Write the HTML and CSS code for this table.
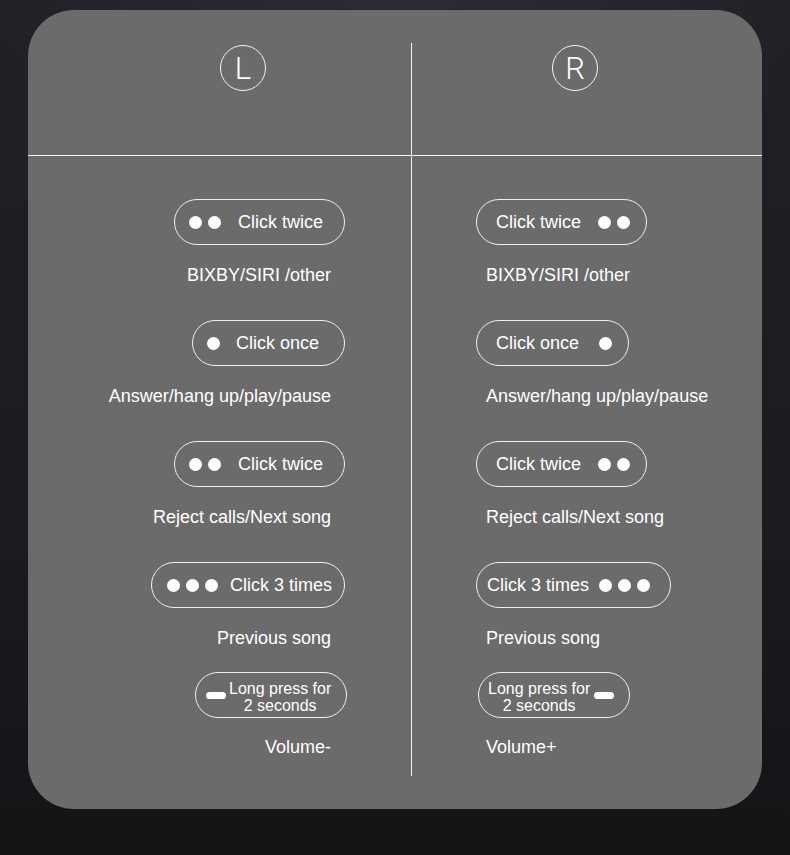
FILE: index.html
```html
<!DOCTYPE html>
<html lang="en">
<head>
<meta charset="utf-8">
<title>Earbud controls</title>
<link rel="stylesheet" href="styles.css">
</head>
<body>
<main class="card">
  <div class="head head--left"><span class="badge">L</span></div>
  <div class="divider"></div>
  <div class="head head--right"><span class="badge">R</span></div>

  <section class="col col--left">
    <div class="item">
      <div class="pill pill--l-twice"><span class="dots"><i></i><i></i></span><span class="txt">Click twice</span></div>
      <p class="label">BIXBY/SIRI /other</p>
    </div>
    <div class="item">
      <div class="pill pill--l-once"><span class="dots"><i></i></span><span class="txt">Click once</span></div>
      <p class="label">Answer/hang up/play/pause</p>
    </div>
    <div class="item">
      <div class="pill pill--l-twice"><span class="dots"><i></i><i></i></span><span class="txt">Click twice</span></div>
      <p class="label">Reject calls/Next song</p>
    </div>
    <div class="item">
      <div class="pill pill--l-three"><span class="dots"><i></i><i></i><i></i></span><span class="txt">Click 3 times</span></div>
      <p class="label">Previous song</p>
    </div>
    <div class="item item--last">
      <div class="pill pill--l-long"><span class="dash"></span><span class="txt txt--two">Long press for<br>2 seconds</span></div>
      <p class="label">Volume-</p>
    </div>
  </section>

  <section class="col col--right">
    <div class="item">
      <div class="pill pill--r-twice"><span class="txt">Click twice</span><span class="dots"><i></i><i></i></span></div>
      <p class="label">BIXBY/SIRI /other</p>
    </div>
    <div class="item">
      <div class="pill pill--r-once"><span class="txt">Click once</span><span class="dots"><i></i></span></div>
      <p class="label">Answer/hang up/play/pause</p>
    </div>
    <div class="item">
      <div class="pill pill--r-twice"><span class="txt">Click twice</span><span class="dots"><i></i><i></i></span></div>
      <p class="label">Reject calls/Next song</p>
    </div>
    <div class="item">
      <div class="pill pill--r-three"><span class="txt">Click 3 times</span><span class="dots"><i></i><i></i><i></i></span></div>
      <p class="label">Previous song</p>
    </div>
    <div class="item item--last">
      <div class="pill pill--r-long"><span class="txt txt--two">Long press for<br>2 seconds</span><span class="dash"></span></div>
      <p class="label">Volume+</p>
    </div>
  </section>
</main>
</body>
</html>
```

FILE: styles.css
```css
* { box-sizing: border-box; }

html, body { margin: 0; padding: 0; }

body {
  width: 790px;
  height: 855px;
  overflow: hidden;
  background:
    radial-gradient(ellipse 420px 260px at 400px -20px, #2c2d33 0%, rgba(44,45,51,0) 100%),
    linear-gradient(180deg, #202126 0%, #1b1c20 60%, #141417 100%);
  font-family: "Liberation Sans", Arial, sans-serif;
  color: #fff;
  padding-top: 10px;
}

.card {
  margin-left: 28px;
  width: 734px;
  height: 799px;
  background: #6b6b6c;
  border-radius: 46px;
  display: grid;
  grid-template-columns: 383px 1px 1fr;
  grid-template-rows: 146px 1fr;
}

.head {
  border-bottom: 1px solid #f2f2f2;
  padding-top: 35px;
}
.head--left { grid-column: 1; grid-row: 1; padding-left: 192px; }
.head--right { grid-column: 3; grid-row: 1; padding-left: 140px; }

.divider {
  grid-column: 2;
  grid-row: 1 / 3;
  background: #f2f2f2;
  margin: 33px 0 33px;
}

.badge {
  display: flex;
  align-items: center;
  justify-content: center;
  width: 46px;
  height: 46px;
  border: 1px solid #f4f4f4;
  border-radius: 50%;
  font-family: Roboto, "Liberation Sans", sans-serif;
  font-weight: 300;
  font-size: 31px;
  line-height: 1;
  color: #fff;
  padding-top: 1px;
}

.col {
  grid-row: 2;
  display: flex;
  flex-direction: column;
  gap: 34px;
  padding-top: 43px;
}
.col--left { grid-column: 1; align-items: flex-end; padding-right: 66px; }
.col--right { grid-column: 3; align-items: flex-start; padding-left: 64px; }

.item {
  display: flex;
  flex-direction: column;
}
.col--left .item { align-items: flex-end; }
.col--right .item { align-items: flex-start; }
.item--last { margin-top: -11px; }

.pill {
  display: flex;
  align-items: center;
  height: 46px;
  border: 1px solid #f0f0f0;
  border-radius: 23px;
  font-size: 18px;
}

.txt { white-space: nowrap; }
.txt--two {
  font-size: 16px;
  line-height: 17px;
  text-align: center;
  padding-top: 3px;
}

.dots { display: flex; gap: 6px; }
.dots i {
  display: block;
  width: 13px;
  height: 13px;
  border-radius: 50%;
  background: #fff;
}

.dash {
  display: block;
  width: 20px;
  height: 7px;
  border-radius: 4px;
  background: #fff;
  flex: none;
}

.pill--l-twice { width: 171px; padding-left: 14px; gap: 17px; }
.pill--l-once  { width: 153px; padding-left: 14px; gap: 16px; }
.pill--l-three { width: 194px; padding-left: 15px; gap: 12px; }
.pill--l-long  { width: 152px; padding-left: 10px; gap: 3px; margin-right: -2px; }

.pill--r-twice { width: 171px; padding-left: 19px; gap: 17px; }
.pill--r-once  { width: 153px; padding-left: 19px; gap: 20px; }
.pill--r-three { width: 195px; padding-left: 10px; gap: 10px; }
.pill--r-long  { width: 152px; padding-left: 9px; gap: 4px; margin-left: 2px; }

.label {
  margin: 19px 0 0;
  font-size: 18px;
  line-height: 22px;
  white-space: nowrap;
}
.col--left .label { margin-right: 14px; }
.col--right .label { margin-left: 10px; }
.item--last .label { margin-top: 18px; }
```
